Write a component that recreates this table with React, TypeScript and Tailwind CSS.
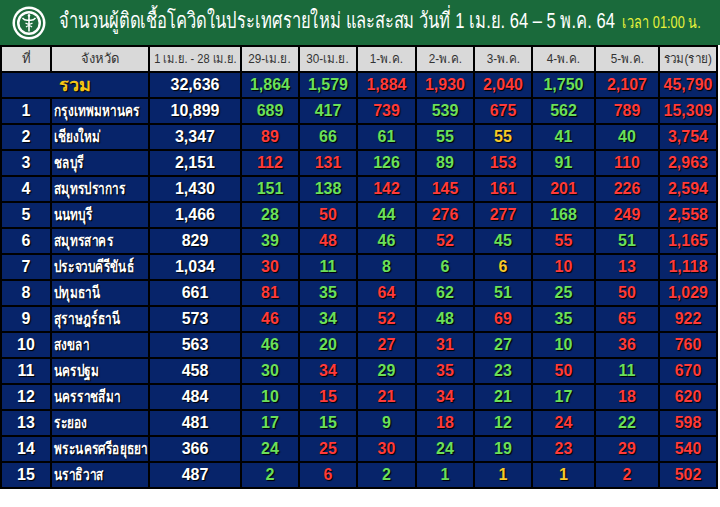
const G = 'g'
const R = 'r'
const Y = 'y'

type Row = { no: string; name: string; base: string; days: [string, string][]; total: string }

const headers = ['29-เม.ย.', '30-เม.ย.', '1-พ.ค.', '2-พ.ค.', '3-พ.ค.', '4-พ.ค.', '5-พ.ค.']

const totalRow: [string, string][] = [
  ['1,864', G], ['1,579', G], ['1,884', R], ['1,930', R], ['2,040', R], ['1,750', G], ['2,107', R],
]

const rows: Row[] = [
  { no: '1', name: 'กรุงเทพมหานคร', base: '10,899', total: '15,309', days: [['689', G], ['417', G], ['739', R], ['539', G], ['675', R], ['562', G], ['789', R]] },
  { no: '2', name: 'เชียงใหม่', base: '3,347', total: '3,754', days: [['89', R], ['66', G], ['61', G], ['55', G], ['55', Y], ['41', G], ['40', G]] },
  { no: '3', name: 'ชลบุรี', base: '2,151', total: '2,963', days: [['112', R], ['131', R], ['126', G], ['89', G], ['153', R], ['91', G], ['110', R]] },
  { no: '4', name: 'สมุทรปราการ', base: '1,430', total: '2,594', days: [['151', G], ['138', G], ['142', R], ['145', R], ['161', R], ['201', R], ['226', R]] },
  { no: '5', name: 'นนทบุรี', base: '1,466', total: '2,558', days: [['28', G], ['50', R], ['44', G], ['276', R], ['277', R], ['168', G], ['249', R]] },
  { no: '6', name: 'สมุทรสาคร', base: '829', total: '1,165', days: [['39', G], ['48', R], ['46', G], ['52', R], ['45', G], ['55', R], ['51', G]] },
  { no: '7', name: 'ประจวบคีรีขันธ์', base: '1,034', total: '1,118', days: [['30', R], ['11', G], ['8', G], ['6', G], ['6', Y], ['10', R], ['13', R]] },
  { no: '8', name: 'ปทุมธานี', base: '661', total: '1,029', days: [['81', R], ['35', G], ['64', R], ['62', G], ['51', G], ['25', G], ['50', R]] },
  { no: '9', name: 'สุราษฎร์ธานี', base: '573', total: '922', days: [['46', R], ['34', G], ['52', R], ['48', G], ['69', R], ['35', G], ['65', R]] },
  { no: '10', name: 'สงขลา', base: '563', total: '760', days: [['46', G], ['20', G], ['27', R], ['31', R], ['27', G], ['10', G], ['36', R]] },
  { no: '11', name: 'นครปฐม', base: '458', total: '670', days: [['30', G], ['34', R], ['29', G], ['35', R], ['23', G], ['50', R], ['11', G]] },
  { no: '12', name: 'นครราชสีมา', base: '484', total: '620', days: [['10', G], ['15', R], ['21', R], ['34', R], ['21', G], ['17', G], ['18', R]] },
  { no: '13', name: 'ระยอง', base: '481', total: '598', days: [['17', G], ['15', G], ['9', G], ['18', R], ['12', G], ['24', R], ['22', G]] },
  { no: '14', name: 'พระนครศรีอยุธยา', base: '366', total: '540', days: [['24', G], ['25', R], ['30', R], ['24', G], ['19', G], ['23', R], ['29', R]] },
  { no: '15', name: 'นราธิวาส', base: '487', total: '502', days: [['2', G], ['6', R], ['2', G], ['1', G], ['1', Y], ['1', Y], ['2', R]] },
]

const tone: Record<string, string> = {
  g: 'text-[#6be05a]',
  r: 'text-[#ff3a3a]',
  y: 'text-[#f7c92a]',
}

const cell = 'bg-[#07246a] flex items-center justify-center font-bold text-[16px] [text-shadow:1px_1px_1px_#000]'
const head = 'bg-[#d9d9d9] flex items-center justify-center text-[13px] text-[#333] whitespace-nowrap overflow-hidden'

function Logo() {
  return (
    <svg width="34" height="34" viewBox="0 0 34 34" className="shrink-0">
      <circle cx="17" cy="17" r="16.5" fill="#fff" />
      <circle cx="17" cy="17" r="13" fill="none" stroke="#1f6b3d" strokeWidth="2" />
      <circle cx="17" cy="17" r="9.5" fill="#1f6b3d" />
      <path d="M17 8.5 V25.5" stroke="#fff" strokeWidth="1.6" />
      <path d="M10.5 12 Q13 15 17 14 Q21 15 23.5 12" stroke="#fff" strokeWidth="1.4" fill="none" />
      <path d="M13.5 17 Q17 19.5 20.5 17 M14 21 Q17 18.5 20 21" stroke="#fff" strokeWidth="1.2" fill="none" />
      <circle cx="17" cy="9.5" r="1.3" fill="#fff" />
    </svg>
  )
}

export default function App() {
  return (
    <div className="w-[720px] h-[507px] bg-white" style={{ fontFamily: '"Liberation Sans", Tahoma, "Noto Sans", sans-serif' }}>
      <div className="h-[45px] bg-[#1a6a3b] flex items-center pl-[12px] gap-[13px] overflow-hidden">
        <Logo />
        <div className="flex items-baseline gap-[10px] text-white whitespace-nowrap scale-x-[0.75] origin-left">
          <span className="text-[22px] leading-none">จำนวนผู้ติดเชื้อโควิดในประเทศรายใหม่ และสะสม วันที่ 1 เม.ย. 64 – 5 พ.ค. 64</span>
          <span className="text-[17px] text-[#e8f23a]">เวลา 01:00 น.</span>
        </div>
      </div>
      <div className="w-[718px] bg-black p-[2px] grid gap-[2px] grid-cols-[48px_96px_90px_56px_56px_57px_56px_56px_61px_62px_56px] auto-rows-[24px]">
        <div className={head}>ที่</div>
        <div className={head}>จังหวัด</div>
        <div className={head}>
          <span className="inline-block scale-x-[0.85]">1 เม.ย. - 28 เม.ย.</span>
        </div>
        {headers.map((h) => (
          <div key={h} className={head}>
            <span className="inline-block scale-x-[0.9]">{h}</span>
          </div>
        ))}
        <div className={head}>
          <span className="inline-block scale-x-[0.9]">รวม(ราย)</span>
        </div>

        <div className={`${cell} col-span-2 text-[#f5c518] text-[18px]`}>รวม</div>
        <div className={`${cell} text-white`}>32,636</div>
        {totalRow.map(([v, c], i) => (
          <div key={i} className={`${cell} ${tone[c]}`}>{v}</div>
        ))}
        <div className={`${cell} ${tone.r}`}>45,790</div>

        {rows.map((r) => (
          <div key={r.no} className="contents">
            <div className={`${cell} text-white`}>{r.no}</div>
            <div className={`${cell} text-white justify-start pl-[2px] text-[14px] whitespace-nowrap overflow-hidden`}>
              <span className="inline-block scale-x-[0.74] origin-left">{r.name}</span>
            </div>
            <div className={`${cell} text-white`}>{r.base}</div>
            {r.days.map(([v, c], i) => (
              <div key={i} className={`${cell} ${tone[c]}`}>{v}</div>
            ))}
            <div className={`${cell} ${tone.r}`}>{r.total}</div>
          </div>
        ))}
      </div>
    </div>
  )
}
